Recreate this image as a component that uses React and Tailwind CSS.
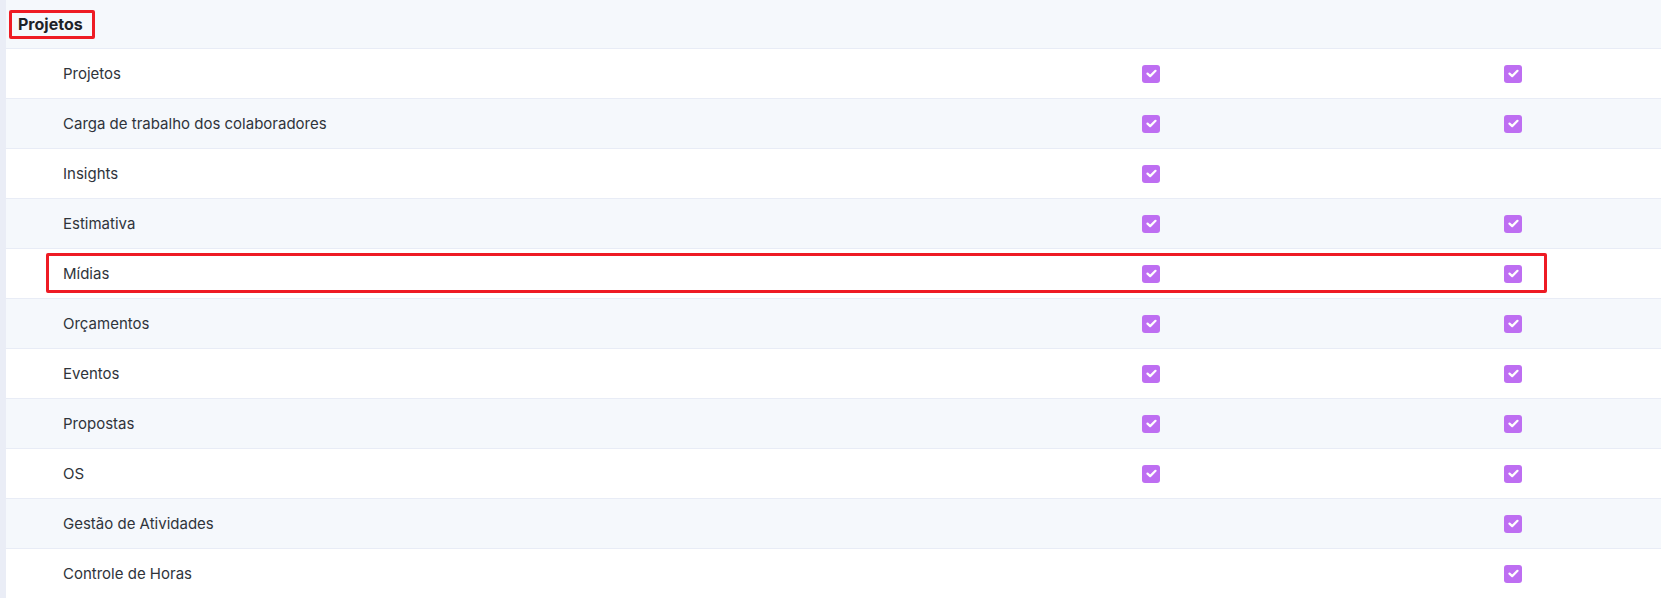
import React from "react";

const rows = [
  { name: "Projetos", a: true, b: true },
  { name: "Carga de trabalho dos colaboradores", a: true, b: true },
  { name: "Insights", a: true, b: false },
  { name: "Estimativa", a: true, b: true },
  { name: "Mídias", a: true, b: true, marked: true },
  { name: "Orçamentos", a: true, b: true },
  { name: "Eventos", a: true, b: true },
  { name: "Propostas", a: true, b: true },
  { name: "OS", a: true, b: true },
  { name: "Gestão de Atividades", a: false, b: true },
  { name: "Controle de Horas", a: false, b: true },
];

const Check = () => (
  <span className="flex h-[18px] w-[18px] items-center justify-center rounded-[3px] bg-[#be6ef2]">
    <svg width="11" height="9" viewBox="0 0 11 9" fill="none">
      <path
        d="M1.5 4.6 L4.2 7.1 L9.5 1.8"
        stroke="white"
        strokeWidth="2.2"
        strokeLinecap="round"
        strokeLinejoin="round"
      />
    </svg>
  </span>
);

const App = () => {
  return (
    <div className="flex min-h-[598px] w-full bg-white font-['Inter',sans-serif] text-[15px] text-[#2f343b]">
      <div className="w-[6px] shrink-0 bg-[#eaedf6]" />
      <div className="flex-1">
        <div className="flex h-[48px] items-center bg-[#f5f8fc] pl-[3px]">
          <span className="rounded-[2px] border-[3px] border-[#ee1b24] py-[2px] pl-[6px] pr-[9px] text-[16px] font-bold leading-[19px] text-[#1d2228]">
            Projetos
          </span>
        </div>
        {rows.map((r, i) => (
          <div
            key={r.name}
            className={
              "relative flex h-[50px] items-center border-t border-[#e8ecf6] " +
              (i % 2 === 0 ? "bg-white" : "bg-[#f5f8fc]")
            }
          >
            <div className="w-[1136px] shrink-0 pl-[57px] pt-[2px]">{r.name}</div>
            <div className="w-[362px] shrink-0">{r.a && <Check />}</div>
            <div>{r.b && <Check />}</div>
            {r.marked && (
              <div className="pointer-events-none absolute top-[4px] bottom-[5px] left-[40px] w-[1501px] rounded-[2px] border-[3px] border-[#ee1b24]" />
            )}
          </div>
        ))}
      </div>
    </div>
  );
};

export default App;
